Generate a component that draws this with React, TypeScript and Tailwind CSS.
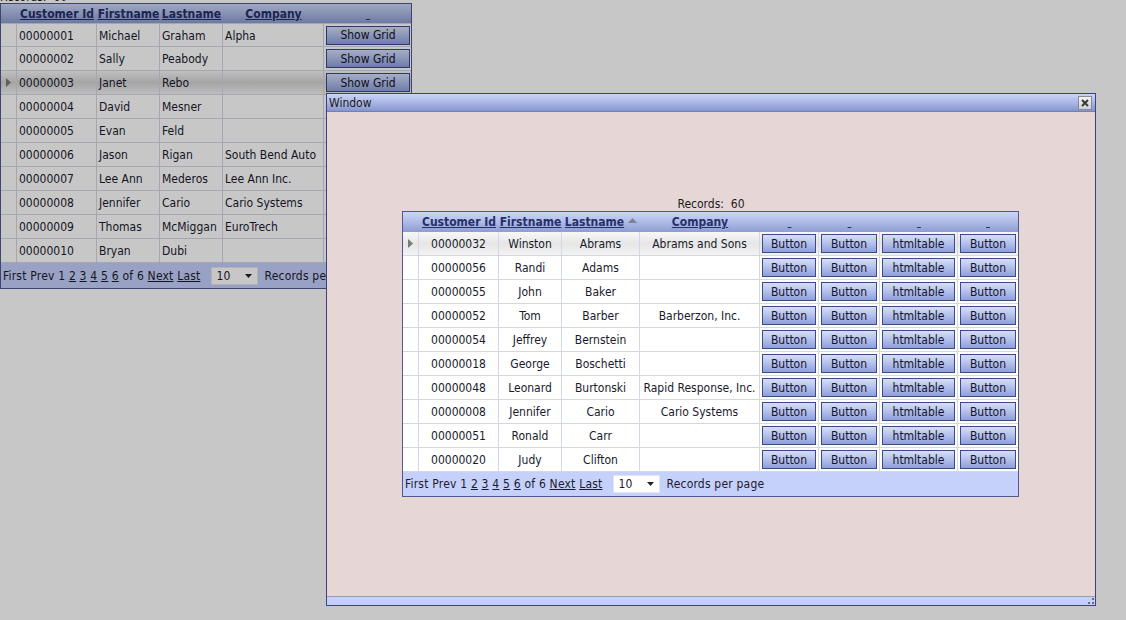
import React from "react";

const FONT = "font-['DejaVu_Sans_Condensed','DejaVu_Sans',sans-serif] font-stretch-condensed";

type Row = [string, string, string, string];

const leftRows: Row[] = [
  ["00000001", "Michael", "Graham", "Alpha"],
  ["00000002", "Sally", "Peabody", ""],
  ["00000003", "Janet", "Rebo", ""],
  ["00000004", "David", "Mesner", ""],
  ["00000005", "Evan", "Feld", ""],
  ["00000006", "Jason", "Rigan", "South Bend Auto"],
  ["00000007", "Lee Ann", "Mederos", "Lee Ann Inc."],
  ["00000008", "Jennifer", "Cario", "Cario Systems"],
  ["00000009", "Thomas", "McMiggan", "EuroTrech"],
  ["00000010", "Bryan", "Dubi", ""],
];

const innerRows: Row[] = [
  ["00000032", "Winston", "Abrams", "Abrams and Sons"],
  ["00000056", "Randi", "Adams", ""],
  ["00000055", "John", "Baker", ""],
  ["00000052", "Tom", "Barber", "Barberzon, Inc."],
  ["00000054", "Jeffrey", "Bernstein", ""],
  ["00000018", "George", "Boschetti", ""],
  ["00000048", "Leonard", "Burtonski", "Rapid Response, Inc."],
  ["00000008", "Jennifer", "Cario", "Cario Systems"],
  ["00000051", "Ronald", "Carr", ""],
  ["00000020", "Judy", "Clifton", ""],
];

function Btn({ label }: { label: string }) {
  return (
    <div className="flex h-[19px] w-full items-center justify-center border border-[#3d4a8a] bg-linear-to-b from-[#d6defa] via-[#b3c0ec] to-[#8f9fd8] text-[12px] leading-none text-[#141428]">
      {label}
    </div>
  );
}

function Indicator() {
  return (
    <svg width="5" height="9" viewBox="0 0 5 9">
      <polygon points="0,0 5,4.5 0,9" fill="#7a7a7a" />
    </svg>
  );
}

function SortUp() {
  return (
    <svg width="9" height="5" viewBox="0 0 9 5" className="ml-[4px] mb-[3px]">
      <polygon points="0,5 4.5,0 9,5" fill="#7c8198" />
    </svg>
  );
}

function HeaderText({ children }: { children: React.ReactNode }) {
  return <span className="font-bold underline text-[#25306a]">{children}</span>;
}

function EmptyHead() {
  return <span className="font-bold underline text-[#25306a]">{"\u00a0"}</span>;
}

function Pager({ h }: { h: string }) {
  return (
    <div className={`flex ${h} items-center whitespace-pre bg-[#c5d0fb] pl-[2px] text-[12px] tracking-[0.2px] text-[#1c1c2c]`}>
      <span>First Prev 1 </span>
      <span className="underline">2</span>
      <span> </span>
      <span className="underline">3</span>
      <span> </span>
      <span className="underline">4</span>
      <span> </span>
      <span className="underline">5</span>
      <span> </span>
      <span className="underline">6</span>
      <span> of 6 </span>
      <span className="underline">Next</span>
      <span> </span>
      <span className="underline">Last</span>
      <div className="ml-[11px] flex h-[18px] w-[47px] shrink-0 items-center justify-between border border-[#e4e4ec] bg-white pl-[4px] pr-[5px]">
        <span>10</span>
        <svg width="7" height="4" viewBox="0 0 7 4">
          <polygon points="0,0 7,0 3.5,4" fill="#222" />
        </svg>
      </div>
      <span className="ml-[6px]">Records per page</span>
    </div>
  );
}

function LeftGrid() {
  const widths = ["w-[16px]", "w-[80px]", "w-[63px]", "w-[63px]", "w-[101px]", "w-[88px]"];
  return (
    <div className="w-[412px] border border-[#4f5990] bg-white">
      <div className="flex h-[19px] items-center bg-linear-to-b from-[#cdd6f7] via-[#aebbe6] to-[#8e9cd1] text-[12px]">
        <div className={`${widths[0]} shrink-0`} />
        <div className={`${widths[1]} shrink-0 text-center`}><HeaderText>Customer Id</HeaderText></div>
        <div className={`${widths[2]} shrink-0 text-center`}><HeaderText>Firstname</HeaderText></div>
        <div className={`${widths[3]} shrink-0 text-center`}><HeaderText>Lastname</HeaderText></div>
        <div className={`${widths[4]} shrink-0 text-center`}><HeaderText>Company</HeaderText></div>
        <div className={`${widths[5]} shrink-0 text-center`}><EmptyHead /></div>
      </div>
      {leftRows.map((r, i) => {
        const sel = i === 2;
        return (
          <div
            key={i}
            className={`flex h-[24px] border-b border-[#d3d6e6] text-[12px] text-[#1a1a30] ${
              sel ? "bg-linear-to-b from-[#f6f6f6] via-[#d4d4d4] to-[#f2f2f2]" : "bg-white"
            } ${i === 0 ? "border-t" : ""}`}
          >
            <div className={`${widths[0]} flex shrink-0 items-center justify-center border-r border-[#d3d6e6]`}>
              {sel ? <Indicator /> : null}
            </div>
            {r.map((c, j) => (
              <div
                key={j}
                className={`${widths[j + 1]} flex shrink-0 items-center whitespace-nowrap border-r border-[#d3d6e6] pl-[2px] pt-[1px]`}
              >
                {c}
              </div>
            ))}
            <div className={`${widths[5]} flex shrink-0 items-center px-[2px]`}>
              <Btn label="Show Grid" />
            </div>
          </div>
        );
      })}
      <Pager h="h-[25px]" />
    </div>
  );
}

function InnerGrid() {
  const widths = ["w-[16px]", "w-[80px]", "w-[63px]", "w-[78px]", "w-[120px]", "w-[59px]", "w-[61px]", "w-[78px]", "w-[60px]"];
  const btns = ["Button", "Button", "htmltable", "Button"];
  return (
    <div className="w-[617px] border border-[#4f5990] bg-white">
      <div className="flex h-[20px] items-center bg-linear-to-b from-[#cdd6f7] via-[#aebbe6] to-[#8e9cd1] text-[12px]">
        <div className={`${widths[0]} shrink-0`} />
        <div className={`${widths[1]} shrink-0 text-center`}><HeaderText>Customer Id</HeaderText></div>
        <div className={`${widths[2]} shrink-0 text-center`}><HeaderText>Firstname</HeaderText></div>
        <div className={`${widths[3]} flex shrink-0 items-center justify-center`}>
          <HeaderText>Lastname</HeaderText>
          <SortUp />
        </div>
        <div className={`${widths[4]} shrink-0 text-center`}><HeaderText>Company</HeaderText></div>
        <div className={`${widths[5]} shrink-0 text-center`}><EmptyHead /></div>
        <div className={`${widths[6]} shrink-0 text-center`}><EmptyHead /></div>
        <div className={`${widths[7]} shrink-0 text-center`}><EmptyHead /></div>
        <div className={`${widths[8]} shrink-0 text-center`}><EmptyHead /></div>
      </div>
      {innerRows.map((r, i) => {
        const sel = i === 0;
        return (
          <div
            key={i}
            className={`flex h-[24px] border-b border-[#d3d6e6] text-[12px] text-[#1a1a2a] ${
              sel ? "bg-linear-to-b from-[#f7f7f7] via-[#e6e6e6] to-[#f3f3f3]" : "bg-white"
            }`}
          >
            <div className={`${widths[0]} flex shrink-0 items-center justify-center border-r border-[#d3d6e6]`}>
              {sel ? <Indicator /> : null}
            </div>
            {r.map((c, j) => (
              <div
                key={j}
                className={`${widths[j + 1]} flex shrink-0 items-center justify-center whitespace-nowrap border-r border-[#d3d6e6]`}
              >
                {c}
              </div>
            ))}
            {btns.map((b, j) => (
              <div
                key={"b" + j}
                className={`${widths[j + 5]} flex shrink-0 items-center pl-[2px] pr-[2px] ${
                  j < 3 ? "border-r border-[#d3d6e6]" : ""
                }`}
              >
                <Btn label={b} />
              </div>
            ))}
          </div>
        );
      })}
      <Pager h="h-[24px]" />
    </div>
  );
}

function CloseBtn() {
  return (
    <div className="flex h-[14px] w-[14px] items-center justify-center border border-[#8a8a96] bg-linear-to-b from-[#f4f4f4] to-[#cfcfd6]">
      <svg width="8" height="8" viewBox="0 0 8 8">
        <path d="M1 1 L7 7 M7 1 L1 7" stroke="#3a3a3a" strokeWidth="2" />
      </svg>
    </div>
  );
}

function Grip() {
  return (
    <svg width="6" height="6" viewBox="0 0 6 6">
      <rect x="4" y="0" width="2" height="2" fill="#6b6b78" />
      <rect x="4" y="4" width="2" height="2" fill="#6b6b78" />
      <rect x="0" y="4" width="2" height="2" fill="#6b6b78" />
    </svg>
  );
}

export default function App() {
  return (
    <div className={`relative h-[620px] w-[1126px] overflow-hidden bg-white ${FONT}`}>
      <div className="flex flex-col">
        <div className="h-[3px] overflow-hidden">
          <div className="-mt-[10px] whitespace-pre text-[12px] leading-[14px] text-[#1a1a1a]">Records:  60</div>
        </div>
        <LeftGrid />
      </div>

      <div className="absolute inset-0 bg-black/[0.22]" />

      <div className="absolute left-[326px] top-[93px] flex h-[513px] w-[770px] flex-col border border-[#3a4080] bg-[#e7d6d6]">
        <div className="flex h-[18px] shrink-0 items-center justify-between border-b border-[#7080ba] bg-linear-to-b from-[#cbd5f7] via-[#aab7e6] to-[#8696cd] pl-[2px] pr-[3px] text-[12px] text-[#1a1a1a]">
          <span>Window</span>
          <CloseBtn />
        </div>
        <div className="flex flex-1 flex-col items-center pt-[85px]">
          <div className="h-[14px] whitespace-pre text-[12px] leading-[14px] text-[#1a1a1a]">Records:  60</div>
          <div className="-ml-[1px]">
            <InnerGrid />
          </div>
        </div>
        <div className="flex h-[9px] shrink-0 items-end justify-end border-t border-[#9c9ca4] bg-[#c4cffc] pb-[1px] pr-[1px]">
          <Grip />
        </div>
      </div>
    </div>
  );
}
